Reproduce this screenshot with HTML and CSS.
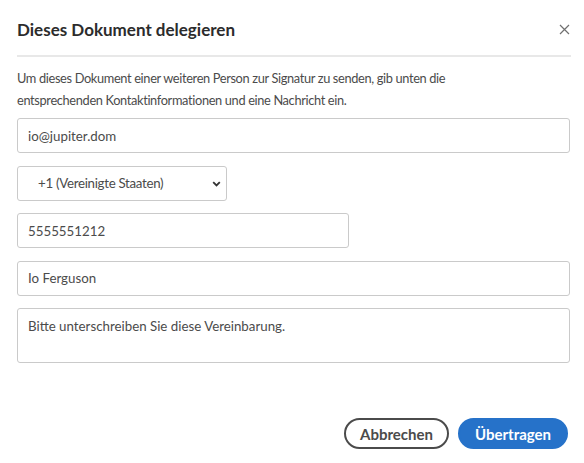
FILE: index.html
```html
<!DOCTYPE html>
<html lang="de">
<head>
<meta charset="utf-8">
<title>Dieses Dokument delegieren</title>
<link rel="stylesheet" href="styles.css">
</head>
<body>
<div class="dialog">
  <header class="dialog-header">
    <h1 class="dialog-title">Dieses Dokument delegieren</h1>
    <button class="close-btn" aria-label="Schließen">
      <svg width="11" height="11" viewBox="0 0 11 11"><path d="M1 1L10 10M10 1L1 10" stroke="#707070" stroke-width="1.2" fill="none"/></svg>
    </button>
  </header>
  <p class="dialog-desc">Um dieses Dokument einer weiteren Person zur Signatur zu senden, gib unten die entsprechenden Kontaktinformationen und eine Nachricht ein.</p>
  <form class="form">
    <input class="field field-full" type="text" value="io@jupiter.dom">
    <div class="select-wrap">
      <select class="field field-select">
        <option>+1 (Vereinigte Staaten)</option>
      </select>
      <svg class="chevron" width="9" height="6" viewBox="0 0 9 6"><path d="M1.2 1.2L4.5 4.5L7.8 1.2" stroke="#333" stroke-width="1.8" fill="none"/></svg>
    </div>
    <input class="field field-phone" type="text" value="5555551212">
    <input class="field field-full" type="text" value="Io Ferguson">
    <textarea class="field field-area">Bitte unterschreiben Sie diese Vereinbarung.</textarea>
  </form>
  <footer class="dialog-footer">
    <button class="btn btn-secondary" type="button">Abbrechen</button>
    <button class="btn btn-primary" type="button">Übertragen</button>
  </footer>
</div>
</body>
</html>
```

FILE: styles.css
```css
* { box-sizing: border-box; }
html, body { margin: 0; background: #fff; }
body {
  font-family: "Lato", "Open Sans", sans-serif;
  color: #4b4b4b;
}
.dialog {
  width: 584px;
  height: 463px;
  padding: 0 13px 0 17px;
  display: flex;
  flex-direction: column;
}
.dialog-header {
  height: 57px;
  display: flex;
  align-items: center;
  justify-content: space-between;
  border-bottom: 2px solid #e8e8e8;
  padding-top: 4px;
}
.dialog-title {
  margin: 0;
  font-size: 17px;
  font-weight: 700;
  color: #2c2c2c;
}
.close-btn {
  background: none;
  border: 0;
  padding: 0;
  margin-right: 1px;
  display: flex;
}
.dialog-desc {
  margin: 10px 0 7px;
  max-width: 445px;
  font-size: 12.8px;
  letter-spacing: -0.35px;
  line-height: 22px;
  color: #4b4b4b;
}
.form {
  display: flex;
  flex-direction: column;
  align-items: flex-start;
  gap: 12.5px;
  margin-right: 1px;
}
.field {
  height: 35px;
  border: 1px solid #cacaca;
  border-radius: 3px;
  background: #fff;
  font-family: inherit;
  font-size: 13.3px;
  color: #4b4b4b;
  padding: 0 10px;
  outline: none;
}
.field-full { width: 100%; }
.field-phone { width: 332px; }
.select-wrap { position: relative; }
.field-select {
  width: 210px;
  appearance: none;
  -webkit-appearance: none;
  padding-left: 20px;
  letter-spacing: -0.3px;
}
.chevron {
  position: absolute;
  right: 6px;
  top: 15px;
  pointer-events: none;
}
.field-area {
  width: 100%;
  height: 55px;
  resize: none;
  padding: 8px 10px;
  line-height: 18px;
}
.dialog-footer {
  margin-top: auto;
  margin-bottom: 14px;
  display: flex;
  justify-content: flex-end;
  gap: 9px;
  margin-right: 3px;
}
.btn {
  height: 31px;
  border-radius: 16px;
  font-family: inherit;
  font-size: 15px;
  font-weight: 700;
  padding: 0 10px;
}
.btn-secondary {
  width: 105px;
  background: #fff;
  border: 2px solid #4b4b4b;
  color: #4b4b4b;
}
.btn-primary {
  width: 110px;
  background: #2672c9;
  border: 2px solid #2672c9;
  color: #fff;
}
```
